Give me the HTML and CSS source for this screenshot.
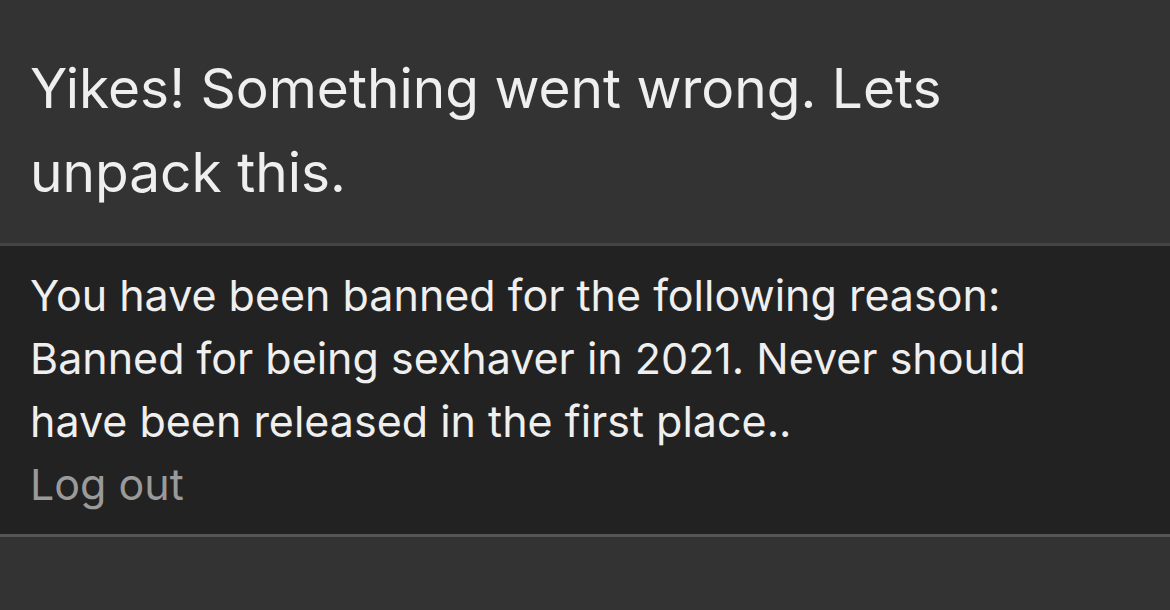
FILE: index.html
```html
<!DOCTYPE html>
<html lang="en">
<head>
  <meta charset="UTF-8">
  <title>Banned</title>
  <link rel="stylesheet" href="styles.css">
</head>
<body>
  <div class="header">
    <h1>Yikes! Something went wrong. Lets unpack this.</h1>
  </div>

  <div class="notice">
    <p>You have been banned for the following reason: Banned for being sexhaver in 2021. Never should have been released in the first place..</p>
    <a href="#" class="logout">Log out</a>
  </div>
</body>
</html>
```

FILE: styles.css
```css
body {
  margin: 0;
  background-color: #333333;
  font-family: Inter, "Noto Sans", sans-serif;
  color: #efefef;
}

.header {
  padding: 46px 40px 29px 30px;
  border-bottom: 3px solid #444444;
}

h1 {
  margin: 0;
  font-size: 55px;
  font-weight: 400;
  line-height: 84px;
}

.notice {
  background-color: #222222;
  padding: 18px 40px 18px 30px;
  border-bottom: 3px solid #555555;
}

.notice p {
  margin: 0;
  font-size: 43px;
  line-height: 63px;
}

.logout {
  display: block;
  font-size: 43px;
  line-height: 63px;
  color: #9a9a9a;
  text-decoration: none;
}
```
